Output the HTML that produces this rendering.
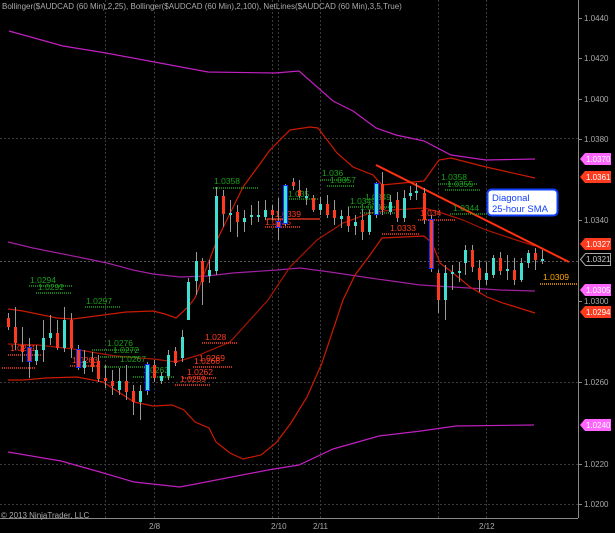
<!DOCTYPE html>
<html><head><meta charset="utf-8"><style>
html,body{margin:0;padding:0;background:#000;}
svg{display:block;font-family:"Liberation Sans",sans-serif;}
</style></head><body>
<svg width="615" height="533" viewBox="0 0 615 533" xmlns="http://www.w3.org/2000/svg">
<rect width="615" height="533" fill="#000"/>
<!-- grid -->
<g stroke="#3a3a3a" stroke-width="1" stroke-dasharray="2,2" fill="none">
<line x1="105.5" y1="0" x2="105.5" y2="518"/><line x1="154.5" y1="0" x2="154.5" y2="518"/>
<line x1="272.5" y1="0" x2="272.5" y2="518"/><line x1="278.5" y1="0" x2="278.5" y2="518"/>
<line x1="320.5" y1="0" x2="320.5" y2="518"/><line x1="438.5" y1="0" x2="438.5" y2="518"/>
<line x1="486.5" y1="0" x2="486.5" y2="518"/>
<line x1="0" y1="138.5" x2="578" y2="138.5"/><line x1="0" y1="382.5" x2="578" y2="382.5"/>
<line x1="0" y1="464.5" x2="578" y2="464.5"/><line x1="0" y1="504.5" x2="578" y2="504.5"/>
<line x1="0" y1="261.5" x2="578" y2="261.5" stroke="#555"/>
</g>
<!-- axis -->
<line x1="578.5" y1="0" x2="578.5" y2="518" stroke="#888"/>
<line x1="0" y1="518.5" x2="578" y2="518.5" stroke="#888"/>
<g fill="#aaa" font-size="8">
<text x="2" y="9">Bollinger($AUDCAD (60 Min),2,25), Bollinger($AUDCAD (60 Min),2,100), NetLines($AUDCAD (60 Min),3,5,True)</text>
<text x="1" y="518">© 2013 NinjaTrader, LLC</text>
<text x="149" y="529">2/8</text><text x="271" y="529">2/10</text><text x="313" y="529">2/11</text><text x="479" y="529">2/12</text>
<text x="584" y="21">1.0440</text><text x="584" y="61">1.0420</text><text x="584" y="102">1.0400</text>
<text x="584" y="142">1.0380</text><text x="584" y="223">1.0340</text><text x="584" y="304">1.0300</text>
<text x="584" y="385">1.0260</text><text x="584" y="467">1.0220</text><text x="584" y="507">1.0200</text>
</g>
<g stroke="#888"><line x1="578" y1="18.5" x2="582" y2="18.5"/><line x1="578" y1="58.5" x2="582" y2="58.5"/><line x1="578" y1="99.5" x2="582" y2="99.5"/><line x1="578" y1="139.5" x2="582" y2="139.5"/><line x1="578" y1="220.5" x2="582" y2="220.5"/><line x1="578" y1="301.5" x2="582" y2="301.5"/><line x1="578" y1="382.5" x2="582" y2="382.5"/><line x1="578" y1="464.5" x2="582" y2="464.5"/><line x1="578" y1="504.5" x2="582" y2="504.5"/></g>
<!-- price tags -->
<g font-size="8">
<path d="M580 159 L585 153 H611 V165 H585 Z" fill="#ff66ff"/><text x="586" y="162" fill="#fff">1.0370</text>
<path d="M580 177 L585 171 H611 V183 H585 Z" fill="#ff3b1f"/><text x="586" y="180" fill="#fff">1.0361</text>
<path d="M580 244 L585 238 H611 V250 H585 Z" fill="#ff3b1f"/><text x="586" y="247" fill="#fff">1.0327</text>
<path d="M580.5 259.5 L585.5 253.5 H610.5 V265.5 H585.5 Z" fill="#000" stroke="#aaa"/><text x="586" y="262" fill="#ccc">1.0321</text>
<path d="M580 290 L585 284 H611 V296 H585 Z" fill="#ff66ff"/><text x="586" y="293" fill="#fff">1.0305</text>
<path d="M580 312 L585 306 H611 V318 H585 Z" fill="#ff3b1f"/><text x="586" y="315" fill="#fff">1.0294</text>
<path d="M580 425 L585 419 H611 V431 H585 Z" fill="#ff66ff"/><text x="586" y="428" fill="#fff">1.0240</text>
</g>
<!-- bands -->
<g fill="none" stroke-width="1.2">
<polyline stroke="#c020c0" points="9,31 63,46 106,53 149,61 208,72 275,73 299,71 333,101 353,111 376,128 396,135 424,141 451,155 486,160 535,159"/>
<polyline stroke="#a020a0" points="8,242 33,248 83,258 107,263 133,270 153,274 180,277 207,276 233,273 277,270 300,268 330,272 370,278 420,285 453,287 500,290 535,291"/>
<polyline stroke="#c020c0" points="8,452 61,461 100,472 134,482 180,487 268,470 299,465 333,449 379,436 421,431 456,426 534,425"/>
<polyline stroke="#cc1a00" points="8,309 23,311 57,318 73,319 126,312 153,311 165,314 176,318 188,307 195,298 217,240 243,187 270,150 290,130 310,127 318,128 337,153 353,167 373,175 382,185 424,181 439,160 451,158 486,167 535,178"/>
<polyline stroke="#aa1500" points="8,344 38,345 73,349 115,356 153,359 176,362 199,355 230,342 268,300 290,267 317,240 343,223 370,213 392,210 424,208 439,212 463,220 486,230 510,238 535,246"/>
<polyline stroke="#cc1a00" points="8,380 23,380 46,378 77,377 103,382 134,402 153,406 172,405 184,410 195,422 209,428 216,442 230,453 243,459 261,455 276,443 291,423 307,397 322,363 333,330 343,300 355,275 370,255 382,238 424,236 432,243 440,263 453,273 470,287 487,297 503,303 535,313"/>
</g>
<line x1="376" y1="165" x2="569" y2="262" stroke="#ff3010" stroke-width="2"/>
<!-- netlines -->
<g font-size="8.5" fill="#1aa01a">
<text x="30" y="283">1.0294</text><text x="38" y="290">1.0292</text><text x="86" y="304">1.0297</text>
<text x="107" y="346">1.0276</text><text x="113" y="353">1.0272</text><text x="120" y="362">1.0267</text><text x="143" y="373">1.0263</text>
<text x="214" y="184">1.0358</text><text x="322" y="176">1.036</text><text x="330" y="183">1.0357</text><text x="288" y="197">1.035</text>
<text x="350" y="204">1.0349</text><text x="365" y="200">1.0349</text><text x="360" y="210">1.0345</text>
<text x="441" y="180">1.0358</text><text x="447" y="187">1.0355</text><text x="453" y="211">1.0344</text>
</g>
<g stroke="#1aa01a" stroke-dasharray="1,1" stroke-width="1.5">
<line x1="29" y1="286" x2="72" y2="286"/><line x1="36" y1="293" x2="72" y2="293"/><line x1="85" y1="307" x2="120" y2="307"/>
<line x1="92" y1="350" x2="140" y2="350"/><line x1="98" y1="357" x2="140" y2="357"/><line x1="104" y1="367" x2="150" y2="367"/><line x1="133" y1="377" x2="175" y2="377"/>
<line x1="213" y1="188" x2="258" y2="188"/><line x1="320" y1="180" x2="350" y2="180"/><line x1="327" y1="186" x2="355" y2="186"/><line x1="285" y1="199" x2="318" y2="199"/>
<line x1="348" y1="207" x2="395" y2="207"/><line x1="360" y1="213" x2="398" y2="213"/>
<line x1="438" y1="184" x2="478" y2="184"/><line x1="445" y1="190" x2="480" y2="190"/><line x1="450" y1="214" x2="490" y2="214"/>
</g>
<g font-size="8.5" fill="#ff3b1f">
<text x="10" y="351">1.0271</text><text x="72" y="363">1.0263</text><text x="205" y="340">1.028</text>
<text x="199" y="361">1.0269</text><text x="194" y="364">1.0266</text><text x="187" y="375">1.0262</text><text x="180" y="382">1.0259</text>
<text x="275" y="217">1.0339</text><text x="265" y="225">1.0335</text><text x="390" y="231">1.0333</text><text x="420" y="216">1.034</text>
</g>
<g stroke="#ff3b1f" stroke-dasharray="1,1" stroke-width="1.5">
<line x1="8" y1="355" x2="42" y2="355"/><line x1="2" y1="368" x2="35" y2="368"/><line x1="70" y1="366" x2="100" y2="366"/>
<line x1="202" y1="343" x2="237" y2="343"/><line x1="193" y1="367" x2="232" y2="367"/><line x1="183" y1="378" x2="217" y2="378"/><line x1="175" y1="385" x2="210" y2="385"/>
<line x1="265" y1="227" x2="300" y2="227"/><line x1="382" y1="234" x2="420" y2="234"/><line x1="418" y1="220" x2="455" y2="220"/>
</g>
<line x1="267" y1="219" x2="320" y2="219" stroke="#ff3b1f" stroke-width="1.2"/>
<text x="543" y="280" font-size="8.5" fill="#ffa500">1.0309</text>
<line x1="540" y1="284" x2="578" y2="284" stroke="#ffa500" stroke-dasharray="1,1" stroke-width="1.5"/>
<!-- candles -->
<g id="c" stroke-width="1"></g>
<!-- callout -->
<rect x="487.5" y="189.5" width="70" height="26" rx="4" fill="#fff" stroke="#1040ff" stroke-width="2"/>
<text x="492" y="201" font-size="9.5" fill="#1040ff">Diagonal</text>
<text x="492" y="212" font-size="9.5" fill="#1040ff">25-hour SMA</text>
</svg>
<script>
var d=[[8,313,330,318,327,0],[15,307,350,327,343,0],[22,327,362,345,352,0],[29,338,378,348,361,2],[36,345,365,350,361,1],[43,320,362,338,350,1],[50,315,345,333,338,1],[57,320,350,333,348,0],[64,307,352,320,348,1],[71,313,358,320,348,0],[78,345,370,350,367,2],[84,350,374,361,368,1],[92,352,372,358,367,0],[98,355,382,361,379,0],[105,365,388,378,381,0],[112,370,395,381,386,0],[119,368,395,381,390,1],[126,365,400,381,392,0],[133,385,415,391,402,0],[140,385,420,391,402,1],[147,362,395,365,390,3],[154,360,382,365,378,0],[161,372,384,376,381,1],[168,350,380,355,376,1],[175,347,366,351,363,0],[182,330,362,337,358,1],[188,278,310,282,320,1],[196,252,295,261,281,1],[202,258,305,261,282,0],[209,260,283,270,276,1],[216,187,275,196,271,1],[223,190,227,196,214,0],[230,200,232,213,215,1],[237,205,237,212,222,0],[244,210,232,218,222,1],[251,205,225,215,217,1],[258,201,222,215,217,1],[265,200,220,210,217,1],[272,205,220,210,215,0],[278,198,240,222,227,2],[285,184,226,186,223,3],[293,178,190,182,186,0],[299,180,198,190,196,0],[306,188,205,196,198,1],[313,195,212,198,210,0],[320,197,215,204,210,1],[327,195,218,204,215,0],[334,200,225,210,218,0],[341,210,228,216,219,1],[348,207,232,216,226,0],[355,215,235,222,226,1],[362,210,240,220,232,0],[369,210,235,215,232,1],[376,182,218,184,214,3],[382,172,215,184,210,0],[390,195,215,202,212,1],[397,192,222,200,218,0],[404,190,222,198,218,1],[410,186,200,193,196,1],[416,183,200,191,193,1],[424,188,224,193,220,0],[431,215,272,220,268,2],[438,270,313,273,300,0],[445,265,320,273,300,1],[452,265,290,272,274,1],[459,262,282,271,273,1],[465,245,275,250,263,1],[472,245,272,250,267,0],[479,260,292,268,280,0],[486,262,285,273,280,1],[493,255,278,258,275,1],[500,252,275,258,271,0],[507,255,280,269,271,1],[514,258,285,270,280,0],[521,258,282,263,280,1],[528,250,268,253,263,1],[535,248,270,253,260,0],[542,250,264,259,261,1]];
var g=document.getElementById('c'),s='';
d.forEach(function(c){var x=c[0],hi=c[1],lo=c[2],a=Math.min(c[3],c[4]),b=Math.max(c[3],c[4]),t=c[5];
var up=(t==1||t==3),col=up?'#40e0d0':'#ff3b1f';
s+='<line x1="'+(x+0.5)+'" y1="'+hi+'" x2="'+(x+0.5)+'" y2="'+lo+'" stroke="#999"/>';
if(t>=2)s+='<rect x="'+(x-2)+'" y="'+(a-1)+'" width="5" height="'+(b-a+2)+'" fill="#1030ff"/>';
s+='<rect x="'+(x-1)+'" y="'+a+'" width="3" height="'+Math.max(1,b-a)+'" fill="'+col+'"/>';});
g.innerHTML=s;
</script>
</body></html>
